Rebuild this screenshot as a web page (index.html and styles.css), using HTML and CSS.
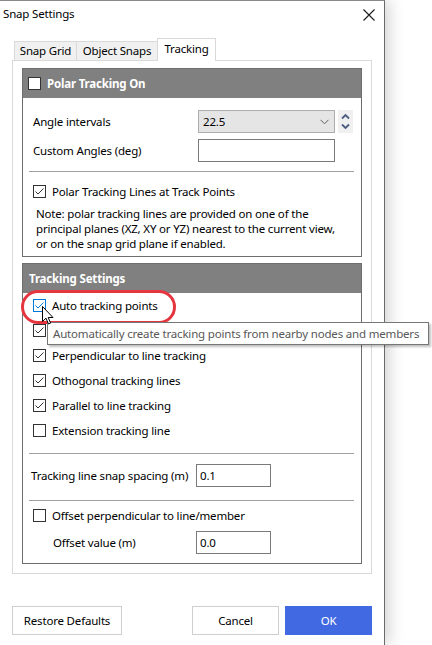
FILE: index.html
```html
<!DOCTYPE html>
<html>
<head>
<meta charset="utf-8">
<title>Snap Settings</title>
<link rel="stylesheet" href="styles.css">
</head>
<body>
<div class="window">
  <div class="titlebar">
    <span class="title">Snap Settings</span>
    <svg class="close" width="12" height="12" viewBox="0 0 12 12"><path d="M0.5 0.5L11.5 11.5M11.5 0.5L0.5 11.5" stroke="#1a1a1a" stroke-width="1.1" fill="none"/></svg>
  </div>
  <div class="tabs">
    <div class="tab t1">Snap Grid</div>
    <div class="tab t2">Object Snaps</div>
    <div class="tab active">Tracking</div>
  </div>
  <div class="panel">
    <section class="group g1">
      <div class="ghead"><span class="cb head-cb"></span><span>Polar Tracking On</span></div>
      <div class="frow first">
        <span class="flabel">Angle intervals</span>
        <div class="combo"><span>22.5</span>
          <svg width="9" height="6" viewBox="0 0 9 6"><path d="M0.5 0.8L4.5 4.8L8.5 0.8" stroke="#606060" fill="none" stroke-width="1"/></svg>
        </div>
        <div class="spin">
          <svg width="15" height="23" viewBox="0 0 15 23"><path d="M4 8.5L7.5 5L11 8.5" stroke="#4d5d80" stroke-width="1.8" fill="none"/><path d="M4 14.5L7.5 18L11 14.5" stroke="#4d5d80" stroke-width="1.8" fill="none"/></svg>
        </div>
      </div>
      <div class="frow second">
        <span class="flabel">Custom Angles (deg)</span>
        <div class="input wide"></div>
      </div>
      <div class="sep s1"></div>
      <div class="crow polar">
        <span class="cb"><svg width="11" height="11" viewBox="0 0 11 11"><path d="M1.5 5.5L4 8L9.5 2.5" stroke="#333" fill="none" stroke-width="1"/></svg></span>
        <span>Polar Tracking Lines at Track Points</span>
      </div>
      <p class="note">Note: polar tracking lines are provided on one of the<br>principal planes (XZ, XY or YZ) nearest to the current view,<br>or on the snap grid plane if enabled.</p>
    </section>
    <section class="group g2">
      <div class="ghead g2head"><span>Tracking Settings</span></div>
      <div class="crow r25">
        <span class="cb hover"><svg width="11" height="11" viewBox="0 0 11 11"><path d="M1.5 5.5L4 8L9.5 2.5" stroke="#0078d7" fill="none" stroke-width="1"/></svg></span>
        <span>Auto tracking points</span>
      </div>
      <div class="crow r25">
        <span class="cb"><svg width="11" height="11" viewBox="0 0 11 11"><path d="M1.5 5.5L4 8L9.5 2.5" stroke="#333" fill="none" stroke-width="1"/></svg></span>
      </div>
      <div class="crow r25">
        <span class="cb"><svg width="11" height="11" viewBox="0 0 11 11"><path d="M1.5 5.5L4 8L9.5 2.5" stroke="#333" fill="none" stroke-width="1"/></svg></span>
        <span>Perpendicular to line tracking</span>
      </div>
      <div class="crow r25">
        <span class="cb"><svg width="11" height="11" viewBox="0 0 11 11"><path d="M1.5 5.5L4 8L9.5 2.5" stroke="#333" fill="none" stroke-width="1"/></svg></span>
        <span>Othogonal tracking lines</span>
      </div>
      <div class="crow r25">
        <span class="cb"><svg width="11" height="11" viewBox="0 0 11 11"><path d="M1.5 5.5L4 8L9.5 2.5" stroke="#333" fill="none" stroke-width="1"/></svg></span>
        <span>Parallel to line tracking</span>
      </div>
      <div class="crow r25">
        <span class="cb"></span>
        <span>Extension tracking line</span>
      </div>
      <div class="sep s2"></div>
      <div class="frow snap">
        <span class="slabel">Tracking line snap spacing (m)</span>
        <div class="input small"><span>0.1</span></div>
      </div>
      <div class="sep s3"></div>
      <div class="crow offset">
        <span class="cb"></span>
        <span>Offset perpendicular to line/member</span>
      </div>
      <div class="frow oval">
        <span class="olabel">Offset value (m)</span>
        <div class="input small"><span>0.0</span></div>
      </div>
    </section>
  </div>
  <div class="buttons">
    <button class="btn restore">Restore Defaults</button>
    <button class="btn cancel">Cancel</button>
    <button class="btn ok">OK</button>
  </div>
</div>

<div class="highlight"></div>
<div class="tooltip">Automatically create tracking points from nearby nodes and members</div>
<svg class="cursor" width="13" height="20" viewBox="0 0 13 20"><path d="M0.5 0.5L0.5 15.5L4 12.2L6.5 18L8.6 17.1L6.2 11.5L11 11.5Z" fill="#fff" stroke="#000" stroke-width="1" stroke-linejoin="miter"/></svg>
</body>
</html>
```

FILE: styles.css
```css
* { box-sizing: border-box; }

body {
  margin: 0;
  background: #fff;
  font-family: "Noto Sans", "Open Sans", sans-serif;
  font-size: 11.5px;
  letter-spacing: -0.18px;
  color: #000;
  overflow: hidden;
}

.window {
  width: 385px;
  height: 645px;
  border-top: 1px solid #8a8a8a;
  border-right: 1px solid #6a6a6a;
  box-shadow: 5px 0 14px rgba(0, 0, 0, 0.16);
  background: #fff;
}

.titlebar {
  height: 37px;
  display: flex;
  justify-content: space-between;
  align-items: flex-start;
  padding: 5px 9px 0 3px;
}

.title {
  line-height: 16px;
}

.close {
  margin-top: 3px;
}

.tabs {
  display: flex;
  align-items: flex-end;
  height: 22px;
  padding-left: 14px;
  position: relative;
  z-index: 1;
}

.tab {
  height: 19px;
  line-height: 17px;
  text-align: center;
  background: #f0f0f0;
  border: 1px solid #d9d9d9;
  border-bottom: 0;
  border-right: 0;
  white-space: nowrap;
}

.t1 { width: 62px; }
.t2 { width: 81px; }

.tab.active {
  width: 59px;
  height: 23px;
  margin-bottom: -1px;
  line-height: 19px;
  background: #fff;
  border-right: 1px solid #d9d9d9;
}

.panel {
  margin-left: 12px;
  width: 360px;
  border: 1px solid #d9d9d9;
  padding: 7px 8px 9px 9px;
}

.group {
  width: 340px;
  border: 1px solid #6e6e6e;
}

.g2 {
  margin-top: 6px;
  padding-bottom: 9px;
}

.ghead {
  height: 29px;
  background: #808080;
  color: #fff;
  font-weight: bold;
  display: flex;
  align-items: center;
  padding-left: 5px;
  gap: 6px;
}

.g2head {
  padding-left: 6px;
}

.cb {
  width: 13px;
  height: 13px;
  border: 1px solid #333;
  background: #fff;
  display: flex;
  align-items: center;
  justify-content: center;
  flex: none;
}

.cb.hover {
  border-color: #0078d7;
}

.frow {
  display: flex;
  align-items: center;
  padding-left: 10px;
  height: 23px;
  white-space: nowrap;
}

.frow.first { margin-top: 12px; }
.frow.second { margin-top: 6px; }

.flabel {
  width: 165px;
}

.combo {
  width: 137px;
  height: 23px;
  background: #e5e5e5;
  border: 1px solid #adadad;
  display: flex;
  align-items: center;
  justify-content: space-between;
  padding: 0 5px 0 4px;
}

.spin {
  width: 15px;
  height: 23px;
  margin-left: 3px;
  background: #f0f0f0;
}

.input {
  height: 23px;
  border: 1px solid #7a7a7a;
  background: #fff;
  display: flex;
  align-items: center;
  padding-left: 3px;
}

.input.wide { width: 137px; }
.input.small { width: 75px; }

.sep {
  height: 1px;
  background: #a0a0a0;
  margin-left: 6px;
  margin-right: 7px;
}

.s1 { margin-top: 9px; }
.s2 { margin-top: 10px; }
.s3 { margin-top: 13px; }

.crow {
  display: flex;
  align-items: center;
  gap: 6px;
  padding-left: 10px;
  height: 20px;
  white-space: nowrap;
}

.crow.polar { margin-top: 9px; }
.crow.r25 { height: 25px; }
.crow.offset { margin-top: 4px; }

.note {
  margin: 5px 0 0 0;
  padding: 0 4px 5px 13px;
  line-height: 15px;
  white-space: nowrap;
}

.frow.snap {
  margin-top: 10px;
  padding-left: 8px;
}

.slabel { width: 165px; }

.frow.oval {
  margin-top: 6px;
  padding-left: 30px;
}

.olabel { width: 143px; }

.buttons {
  display: flex;
  margin-top: 32px;
  padding-left: 12px;
}

.btn {
  font-family: inherit;
  font-size: 11.5px;
  letter-spacing: -0.18px;
  height: 29px;
  background: #fff;
  border: 1px solid #cfcfcf;
  color: #000;
  padding: 0;
}

.restore { width: 110px; }
.cancel { width: 87px; margin-left: 70px; }
.ok {
  width: 87px;
  margin-left: 6px;
  background: #4169e1;
  border-color: #4169e1;
  color: #fff;
}

.highlight {
  position: absolute;
  left: 21px;
  top: 290px;
  width: 155px;
  height: 34px;
  border: 3px solid #e5353f;
  border-radius: 17px;
}

.tooltip {
  position: absolute;
  left: 47px;
  top: 322px;
  width: 382px;
  height: 23px;
  border: 1px solid #767676;
  background: #fff;
  color: #575757;
  line-height: 21px;
  padding-left: 5px;
  box-shadow: 2px 2px 2px rgba(0, 0, 0, 0.25);
  white-space: nowrap;
}

.cursor {
  position: absolute;
  left: 42px;
  top: 306px;
}
```
